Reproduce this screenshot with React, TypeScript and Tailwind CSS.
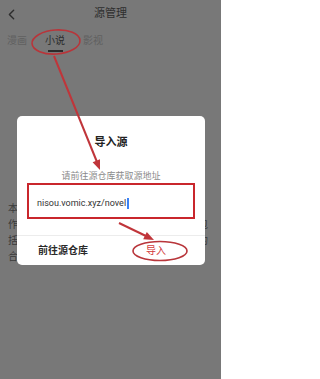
import { ChevronLeft } from "lucide-react";

const lines = [
	"本软件是一个阅读工具，不提供任何内容源，",
	"作品均来自用户自行导入的第三方源，内容包",
	"括漫画、小说、影视等，请在遵守法律法规的",
	"合法前提下使用。",
];

const Annotations = () => (
	<svg
		className="absolute inset-0 pointer-events-none"
		width={221}
		height={379}
		viewBox="0 0 221 379"
		fill="none"
	>
		<ellipse cx={56} cy={42} rx={24} ry={12} stroke="#b8353a" strokeWidth={1.6} transform="rotate(-4 56 42)" />
		<line x1={54} y1={56} x2={97} y2={162} stroke="#c0353a" strokeWidth={2} />
		<polygon points="100,170 92.6,162.2 100,159.2" fill="#c0353a" />
		<line x1={119} y1={223} x2={147} y2={236.5} stroke="#c0353a" strokeWidth={2} />
		<polygon points="154,240 143.2,239.2 146.8,232" fill="#c0353a" />
		<ellipse cx={160} cy={251} rx={27} ry={9.5} stroke="#b8353a" strokeWidth={1.6} />
	</svg>
);

export default function App() {
	return (
		<div className="relative w-[221px] h-[379px] overflow-hidden bg-[#787878] font-['Roboto','Noto_Sans_CJK_SC',sans-serif]">
			<header className="grid grid-cols-[30px_1fr_30px] items-center h-[28px]">
				<ChevronLeft size={17} strokeWidth={2} className="text-[#2e2e2e] ml-[3px]" />
				<h1 className="text-center text-[11px] text-[#2e2e2e]">源管理</h1>
				<span />
			</header>

			<nav className="flex items-start gap-[18px] pl-[7px] pt-[6px] text-[10px] leading-[14px]">
				<span className="text-[#606060]">漫画</span>
				<span className="flex flex-col items-center text-[#2b2b2b]">
					小说
					<span className="mt-[2px] w-[15px] h-[1.5px] bg-[#2b2b2b]" />
				</span>
				<span className="text-[#606060]">影视</span>
			</nav>

			<div className="mt-[149px] pl-[8px] w-[216px] text-[10px] leading-[16px] text-[#3a3a3a]">
				{lines.map((l) => (
					<p key={l} className="whitespace-nowrap">{l}</p>
				))}
			</div>

			<div className="absolute left-[17px] top-[116px] w-[188px] h-[149px] rounded-[5px] bg-white flex flex-col">
				<h2 className="pt-[20px] text-center text-[11px] leading-[14px] font-bold text-[#222]">导入源</h2>
				<p className="mt-[20px] text-center text-[9px] leading-[12px] text-[#8a8a8a]">请前往源仓库获取源地址</p>
				<div className="mt-[1px] mx-[10px] h-[36px] border-2 border-[#c9262c] flex items-center pl-[8px] pt-[4px]">
					<span className="text-[9px] leading-[12px] text-[#333]">nisou.vomic.xyz/novel</span>
					<span className="ml-[1px] w-[2px] h-[11px] bg-[#3b82f6]" />
				</div>
				<div className="mt-[16px] h-px bg-[#ececec]" />
				<div className="grid grid-cols-2 flex-1 items-center text-[10px] leading-[14px]">
					<span className="text-center font-bold text-[#2a2a2a] pr-[2px]">前往源仓库</span>
					<span className="text-center text-[#d2383a] pr-[4px]">导入</span>
				</div>
			</div>

			<Annotations />
		</div>
	);
}
